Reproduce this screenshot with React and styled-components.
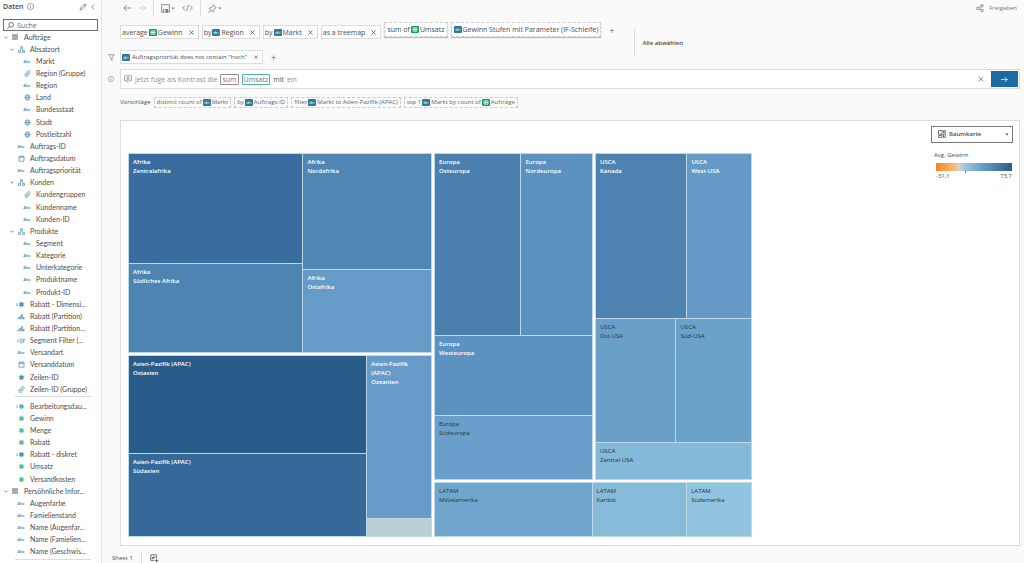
import React, { useState } from "react";
import styled, { createGlobalStyle } from "styled-components";

const colors = {
  text: "#4c4c4c",
  muted: "#8a8a8a",
  line: "#dcdcdc",
  dim: "#5b9cb8",
  measure: "#5cb897",
  tile: "#2f7a9b",
  green: "#0f9d6c",
  primary: "#1c6ba0",
};

const GlobalStyle = createGlobalStyle`
  * {
    box-sizing: border-box;
  }
  body {
    margin: 0;
    background: #fafafa;
    color: ${colors.text};
    font-family: "Open Sans", "Liberation Sans", sans-serif;
    font-size: 7px;
    line-height: 9px;
  }
  button, input, select {
    font: inherit;
    color: inherit;
    margin: 0;
    padding: 0;
    border: none;
    background: none;
    outline: none;
  }
  button {
    cursor: pointer;
  }
  svg {
    display: block;
    flex: none;
  }
`;

const Page = styled.div`
  display: grid;
  grid-template-columns: 102px minmax(0, 1fr);
  min-height: 100vh;
`;

/* ---------- data pane ---------- */

const Sidebar = styled.aside`
  display: flex;
  flex-direction: column;
  min-width: 0;
  background: #ffffff;
  border-right: 1px solid #e4e4e4;
`;
const SidebarHead = styled.header`
  display: flex;
  align-items: center;
  height: 13px;
  margin-bottom: 6px;
  padding: 0 6px 0 3px;
  gap: 4px;
  color: #777777;
  h2 {
    margin: 0;
    color: ${colors.text};
    font-size: 7px;
    font-weight: 600;
  }
  .edit {
    margin-left: auto;
  }
`;
const SearchBox = styled.label`
  display: flex;
  align-items: center;
  gap: 3px;
  height: 12px;
  margin: 0 3px;
  padding: 0 3px;
  border: 1px solid #6d6d6d;
  input {
    flex: 1;
    min-width: 0;
  }
  input::placeholder {
    color: #666666;
    opacity: 1;
  }
`;
const Tree = styled.ul`
  display: flex;
  flex: 1;
  flex-direction: column;
  margin: 0;
  padding: 0;
  list-style: none;
`;
const TreeRow = styled.li`
  display: grid;
  grid-template-columns: 6px 12px minmax(0, 1fr);
  flex: 1 1 12px;
  align-items: center;
  justify-items: center;
  padding-left: ${(p) => 3 + p.$level * 6}px;
  padding-right: 10px;
  color: #777777;
  .name {
    justify-self: start;
    padding-left: 3px;
    color: ${colors.text};
    font-family: Lato, sans-serif;
    white-space: nowrap;
  }
`;
const Divider = styled.li`
  height: 1px;
  margin: 1px 10px 3px 15px;
  background: #dddddd;
`;
const AbcMark = styled.span`
  color: ${colors.dim};
  font-size: 4px;
  font-weight: 700;
`;

/* ---------- main area ---------- */

const Main = styled.main`
  display: flex;
  flex-direction: column;
  min-width: 0;
  padding-right: 4px;
`;
const Toolbar = styled.nav`
  display: flex;
  align-items: center;
  gap: 7px;
  height: 16px;
  padding-left: 21px;
  color: #777777;
`;
const ToolButton = styled.button`
  display: flex;
  align-items: center;
  gap: 1px;
  opacity: ${(p) => (p.disabled ? 0.4 : 1)};
  ${(p) => p.$end && "margin-left: auto; padding-right: 3px; gap: 5px; font-size: 6px;"}
`;
const Rule = styled.span`
  width: 1px;
  height: ${(p) => p.$height || 15}px;
  background: ${colors.line};
`;
const QueryHead = styled.section`
  display: flex;
  align-items: center;
  margin: 6px 0 5px;
`;
const Queries = styled.div`
  display: grid;
  gap: 11px;
`;
const Line = styled.div`
  display: grid;
  grid-template-columns: 18px minmax(0, 1fr);
  align-items: center;
  justify-items: center;
  color: ${colors.muted};
`;
const Pills = styled.div`
  display: flex;
  align-items: flex-end;
  justify-self: start;
  gap: 3px;
`;
const Pill = styled.span`
  display: inline-flex;
  align-items: center;
  gap: ${(p) => (p.$small ? 2 : 1)}px;
  height: 14px;
  padding: 0 4px 0 1px;
  background: #ffffff;
  border: 1px solid ${colors.line};
  color: ${colors.text};
  font-size: ${(p) => (p.$small ? 6 : 7)}px;
  white-space: nowrap;
  button {
    margin-left: 5px;
  }
`;
const PreviewPill = styled(Pill)`
  height: 15px;
  margin-bottom: 2px;
  padding: 0 2px;
  border: 1px dashed #cccccc;
  box-shadow: 0 1px 1px #bbbbbb;
`;
const AddButton = styled.button`
  align-self: center;
  margin-left: 5px;
  color: #666666;
  font-size: 9px;
`;
const Deselect = styled.div`
  display: flex;
  align-items: center;
  gap: 7px;
  margin-left: 20px;
  font-size: 6px;
  font-weight: 600;
`;
const Ask = styled.form`
  display: flex;
  align-items: center;
  justify-self: stretch;
  height: 20px;
  padding: 1px 1px 1px 3px;
  gap: 3px;
  background: #ffffff;
  border: 1px solid ${colors.line};
  color: #919191;
  white-space: nowrap;
  input {
    flex: 1;
    min-width: 0;
  }
`;
const Token = styled.span`
  padding: 0 1px;
  border: 1px solid ${(p) => p.$color};
  border-radius: 1px;
  color: #777777;
`;
const Known = styled.span`
  color: #555555;
`;
const Submit = styled.button`
  display: grid;
  place-items: center;
  align-self: stretch;
  width: 27px;
  margin-left: 4px;
  background: ${colors.primary};
  color: #ffffff;
`;
const Suggestions = styled.div`
  display: flex;
  align-items: center;
  gap: 3px;
  margin: 8px 0 12px 18px;
  font-size: 6px;
  white-space: nowrap;
`;
const Suggestion = styled.button`
  display: flex;
  align-items: center;
  gap: 1px;
  height: 11px;
  padding: 0 2px;
  border: 1px dashed #cccccc;
  color: #666666;
`;
const Badge = styled.span`
  display: inline-grid;
  place-items: center;
  width: 8px;
  height: 7px;
  border-radius: 1px;
  background: ${(p) => (p.$measure ? colors.green : colors.tile)};
  color: #ffffff;
`;
const Panel = styled.section`
  display: grid;
  flex: 1;
  grid-template-columns: minmax(0, 1fr) 82px;
  column-gap: 179px;
  margin-left: 18px;
  padding: 5px 6px 8px 7px;
  background: #ffffff;
  border: 1px solid ${colors.line};
`;

/* ---------- treemap ---------- */

const Split = styled.div`
  display: flex;
  flex: ${(p) => p.$size || 1} 1 0;
  flex-direction: ${(p) => (p.$down ? "column" : "row")};
  gap: ${(p) => (p.$group ? 1 : 2)}px;
  min-width: 0;
  min-height: 0;
`;
const Market = styled(Split)`
  padding: 1px;
  background: #bfd8e6;
`;
const Tile = styled.div`
  flex: ${(p) => p.$size} 1 0;
  min-width: 0;
  min-height: 0;
  overflow: hidden;
  background: ${(p) => p.$fill};
  color: ${(p) => (p.$dark ? "#26323c" : "#ffffff")};
  font-size: 6px;
  font-weight: ${(p) => (p.$dark ? 400 : 600)};
`;
const TileLabel = styled.div`
  padding: 4px 8px 4px 4px;
`;
const MapArea = styled.div`
  display: flex;
  margin-top: 27px;
`;
const Legend = styled.div`
  p {
    margin: 8px 3px 3px;
    font-size: 6px;
  }
`;
const ChartPicker = styled.label`
  position: relative;
  display: block;
  select {
    width: 100%;
    height: 17px;
    padding-left: 17px;
    border: 1px solid #777777;
    appearance: none;
    font-size: 6px;
    font-weight: 600;
  }
  svg {
    position: absolute;
    top: 4px;
    left: 7px;
    pointer-events: none;
  }
  svg.caret {
    top: 7px;
    left: auto;
    right: 4px;
  }
`;
const Ramp = styled.div`
  height: 8px;
  margin: 0 1px 0 5px;
  background: linear-gradient(
    90deg,
    #f28326,
    #fbb567 22%,
    #dccfc0 30%,
    #98c7e0 38%,
    #5f97c4 65%,
    #2a5c8a
  );
`;
const RampTick = styled.div`
  width: 1px;
  height: 2px;
  margin-left: 42%;
  background: #777777;
`;
const RampLabels = styled.div`
  display: flex;
  justify-content: space-between;
  margin: 0 1px 0 5px;
  font-size: 6px;
  line-height: 7px;
`;
const Tabs = styled.footer`
  display: flex;
  align-items: flex-end;
  gap: 8px;
  height: 17px;
  padding-left: 10px;
  font-size: 6px;
  button {
    height: 9px;
  }
`;

/* ---------- icons ---------- */

const Svg = ({ w = 8, h = w, box, children, ...rest }) => (
  <svg
    width={w}
    height={h}
    viewBox={box || `0 0 ${w} ${h}`}
    fill="none"
    stroke="currentColor"
    strokeWidth="0.8"
    aria-hidden="true"
    {...rest}
  >
    {children}
  </svg>
);
const Close = ({ size = 5 }) => (
  <Svg w={size} box="0 0 5 5">
    <path d="M.5 .5l4 4M4.5 .5l-4 4" />
  </Svg>
);
const Caret = (props) => (
  <Svg w={4} h={3} stroke="none" {...props}>
    <path d="M.4 .4h3.2L2 2.4z" fill="currentColor" />
  </Svg>
);
const Arrow = ({ back, w = 8 }) => (
  <Svg w={w} box="0 0 8 8">
    <path d={back ? "M8 4H.8M3.8 1L.8 4l3 3" : "M0 4h7.2M4.2 1l3 3-3 3"} />
  </Svg>
);
const Info = ({ size = 7 }) => (
  <Svg w={size} box="0 0 8 8">
    <circle cx="4" cy="4" r="3.5" />
    <path d="M4 3.5v2.4M4 2v.8" />
  </Svg>
);

const FieldIcon = ({ type }) => {
  if (type === "abc") return <AbcMark>Abc</AbcMark>;
  if (type === "table")
    return (
      <Svg w={6} strokeWidth="0.6">
        <path d="M.5 .5h5v5h-5zM.5 1.5h5M.5 2.8h5M.5 4.1h5M2.2 1.5v4M3.9 1.5v4" />
      </Svg>
    );
  if (type === "hier")
    return (
      <Svg w={7} stroke={colors.dim}>
        <path d="M2.6 .7h1.8v1.6H2.6zM.5 4.6h2v1.8h-2zM4.5 4.6h2v1.8h-2zM3.5 2.3L1.5 4.6M3.5 2.3l2 2.3" />
      </Svg>
    );
  if (type === "group")
    return (
      <Svg w={7} stroke={colors.dim}>
        <path d="M1.2 3.3v1.9a1.3 1.3 0 0 0 2.6 .4L6 2.3A1.2 1.2 0 0 0 4 1L1.9 4.3a.5 .5 0 0 0 .9 .5L4.6 2.2" />
      </Svg>
    );
  if (type === "geo")
    return (
      <Svg w={7} stroke={colors.dim}>
        <circle cx="3.5" cy="3.5" r="2.6" />
        <ellipse cx="3.5" cy="3.5" rx="1" ry="2.6" />
        <path d="M.9 3.5h5.2" />
      </Svg>
    );
  if (type === "date")
    return (
      <Svg w={7} stroke={colors.dim}>
        <path d="M1 1.4h5v4.8H1zM1 2.6h5M2.2 .4v1M4.8 .4v1" />
      </Svg>
    );
  if (type === "bins")
    return (
      <Svg w={8} h={7} stroke="none">
        <path
          d="M.4 4.8h1.4v1.4H.4zM2.3 3h1.5v3.2H2.3zM4.2 1h1.4v5.2H4.2zM6 4h1.5v2.2H6z"
          fill={colors.dim}
        />
      </Svg>
    );
  if (type === "bool")
    return (
      <Svg w={9} h={6} stroke={colors.dim} strokeWidth="0.7">
        <path d="M0 2.2h1.6M0 3.8h1.6M2.4 1.2h2M3.4 1.2v3.8M5.3 .4L4.6 5.8M6.4 5V1.2h2M6.4 3h1.6" />
      </Svg>
    );
  const calc = type.startsWith("calc");
  const fill = type.endsWith("Dim") ? "#4f93b4" : colors.measure;
  return (
    <Svg w={calc ? 11 : 7} h={7} box={calc ? "0 0 11 7" : "0 0 7 7"}>
      <g transform={calc ? "translate(2 0)" : undefined}>
        <path
          d="M2.6 .8v5.4M4.4 .8v5.4M.8 2.6h5.4M.8 4.4h5.4"
          stroke={fill}
          strokeWidth="0.7"
        />
        <circle cx="3.5" cy="3.5" r="1.9" fill={fill} stroke="none" />
      </g>
      {calc && <path d="M.4 3h1.6M.4 4.2h1.6" stroke={fill} />}
    </Svg>
  );
};

const FieldBadge = ({ measure }) => (
  <Badge $measure={measure}>
    {measure ? (
      <Svg w={6} h={5} strokeWidth="0.7">
        <path d="M1 .8h4v3.4H1zM3 .8v3.4M1 2.5h4" />
      </Svg>
    ) : (
      <Svg w={6} h={5} strokeWidth="0.4">
        <circle cx="1.2" cy="2.9" r=".7" />
        <path d="M1.9 2.1v1.5M2.6 1v2.6M5.6 2.3a.7 .7 0 1 0 0 1.1" />
        <circle cx="3.3" cy="2.9" r=".7" />
      </Svg>
    )}
  </Badge>
);

/* ---------- content ---------- */

const fields = [
  [0, "table", "Aufträge", true],
  [1, "hier", "Absatzort", true],
  [2, "abc", "Markt"],
  [2, "group", "Region (Gruppe)"],
  [2, "abc", "Region"],
  [2, "geo", "Land"],
  [2, "abc", "Bundesstaat"],
  [2, "geo", "Stadt"],
  [2, "geo", "Postleitzahl"],
  [1, "abc", "Auftrags-ID"],
  [1, "date", "Auftragsdatum"],
  [1, "abc", "Auftragspriorität"],
  [1, "hier", "Kunden", true],
  [2, "group", "Kundengruppen"],
  [2, "abc", "Kundenname"],
  [2, "abc", "Kunden-ID"],
  [1, "hier", "Produkte", true],
  [2, "abc", "Segment"],
  [2, "abc", "Kategorie"],
  [2, "abc", "Unterkategorie"],
  [2, "abc", "Produktname"],
  [2, "abc", "Produkt-ID"],
  [1, "calcDim", "Rabatt - Dimensi..."],
  [1, "bins", "Rabatt (Partition)"],
  [1, "bins", "Rabatt (Partition..."],
  [1, "bool", "Segment Filter (..."],
  [1, "abc", "Versandart"],
  [1, "date", "Versanddatum"],
  [1, "numDim", "Zeilen-ID"],
  [1, "group", "Zeilen-ID (Gruppe)"],
  null,
  [1, "calc", "Bearbeitungsdau..."],
  [1, "num", "Gewinn"],
  [1, "num", "Menge"],
  [1, "num", "Rabatt"],
  [1, "calcDim", "Rabatt - diskret"],
  [1, "num", "Umsatz"],
  [1, "num", "Versandkosten"],
  [0, "table", "Persöhnliche Infor...", true],
  [1, "abc", "Augenfarbe"],
  [1, "abc", "Famielienstand"],
  [1, "abc", "Name (Augenfar..."],
  [1, "abc", "Name (Famielien..."],
  [1, "abc", "Name (Geschwis..."],
  null,
];

const leaf = (size, name, fill, dark) => ({ size, name, fill, dark });

const treemap = {
  items: [
    {
      size: 304,
      down: true,
      items: [
        {
          size: 199,
          market: "Afrika",
          items: [
            {
              size: 174,
              down: true,
              items: [
                leaf(110, "Zentralafrika", "#3a6d9f"),
                leaf(88, "Südliches Afrika", "#4e84b1"),
              ],
            },
            {
              size: 128,
              down: true,
              items: [
                leaf(116, "Nordafrika", "#5086b4"),
                leaf(82, "Ostafrika", "#659bc6"),
              ],
            },
          ],
        },
        {
          size: 181,
          market: "Asien-Pazifik (APAC)",
          items: [
            {
              size: 238,
              down: true,
              items: [
                leaf(98, "Ostasien", "#2a5c8a"),
                leaf(82, "Südasien", "#35699a"),
              ],
            },
            {
              size: 64,
              down: true,
              items: [
                leaf(163, "Ozeanien", "#659bc6"),
                leaf(17, "", "#b7ced4"),
              ],
            },
          ],
        },
      ],
    },
    {
      size: 318,
      down: true,
      items: [
        {
          size: 327,
          items: [
            {
              size: 159,
              market: "Europa",
              down: true,
              items: [
                {
                  size: 182,
                  items: [
                    leaf(86, "Osteuropa", "#4b80ae"),
                    leaf(71, "Nordeuropa", "#5b91bf"),
                  ],
                },
                leaf(79, "Westeuropa", "#5c92c0"),
                leaf(63, "Südeuropa", "#699fca", true),
              ],
            },
            {
              size: 157,
              market: "USCA",
              down: true,
              items: [
                {
                  size: 164,
                  items: [
                    leaf(91, "Kanada", "#4e83b1"),
                    leaf(64, "West-USA", "#649ac5"),
                  ],
                },
                {
                  size: 123,
                  items: [
                    leaf(80, "Ost-USA", "#699fc9", true),
                    leaf(75, "Süd-USA", "#6ba2ca", true),
                  ],
                },
                leaf(36, "Zentral-USA", "#83b9d9", true),
              ],
            },
          ],
        },
        {
          size: 53,
          market: "LATAM",
          items: [
            leaf(157, "Mittelamerika", "#70a6ce", true),
            leaf(94, "Karibik", "#85bad9", true),
            leaf(64, "Südamerika", "#92c3e0", true),
          ],
        },
      ],
    },
  ],
};

const MapNode = ({ node, market }) => {
  if (!node.items)
    return (
      <Tile $size={node.size} $fill={node.fill} $dark={node.dark}>
        {node.name && (
          <TileLabel>
            <div>{market}</div>
            <div>{node.name}</div>
          </TileLabel>
        )}
      </Tile>
    );
  const current = node.market || market;
  const Box = node.market ? Market : Split;
  return (
    <Box $size={node.size} $down={node.down} $group={!!current}>
      {node.items.map((item, i) => (
        <MapNode key={i} node={item} market={current} />
      ))}
    </Box>
  );
};

const App = () => {
  const [search, setSearch] = useState("");
  const [question, setQuestion] = useState("ein");

  return (
    <Page>
      <GlobalStyle />
      <Sidebar>
        <SidebarHead>
          <h2>Daten</h2>
          <Info />
          <button className="edit" aria-label="Bearbeiten">
            <Svg w={8}>
              <path d="M1 7l.6-2L5.8 .8l1.4 1.4L3 6.4zM5 1.6L6.4 3" />
            </Svg>
          </button>
          <button aria-label="Einklappen">
            <Svg w={4} h={6}>
              <path d="M3.2 .5L.8 3l2.4 2.5" />
            </Svg>
          </button>
        </SidebarHead>
        <SearchBox>
          <Svg w={7}>
            <circle cx="4.2" cy="2.8" r="2.3" />
            <path d="M2.5 4.5L.4 6.6" />
          </Svg>
          <input
            type="text"
            aria-label="Suche"
            placeholder="Suche"
            value={search}
            onChange={(e) => setSearch(e.target.value)}
          />
        </SearchBox>
        <Tree>
          {fields.map((field, i) => {
            if (!field) return <Divider key={i} />;
            const [level, type, name, open] = field;
            return (
              <TreeRow key={i} $level={level}>
                {open ? (
                  <button aria-label={name}>
                    <Svg w={4} h={3}>
                      <path d="M.4 .6L2 2.3 3.6 .6" />
                    </Svg>
                  </button>
                ) : (
                  <span />
                )}
                <FieldIcon type={type} />
                <span className="name">{name}</span>
              </TreeRow>
            );
          })}
        </Tree>
      </Sidebar>

      <Main>
        <Toolbar>
          <ToolButton aria-label="Zurück">
            <Arrow back />
          </ToolButton>
          <ToolButton aria-label="Vorwärts" disabled>
            <Arrow />
          </ToolButton>
          <Rule />
          <ToolButton aria-label="Speichern">
            <Svg w={9}>
              <path d="M.6 .6h7.8v7.6H.6zM2.3 8V5.6h4.4V8" />
              <path d="M5 5.6h1.6v2.6H5z" fill="currentColor" />
            </Svg>
            <Caret />
          </ToolButton>
          <ToolButton aria-label="Einbetten">
            <Svg w={11} h={8}>
              <path d="M3 1.6L.6 4 3 6.4M8 1.6L10.4 4 8 6.4M6.5 .6l-2 6.8" />
            </Svg>
          </ToolButton>
          <Rule />
          <ToolButton aria-label="Anheften">
            <Svg w={9}>
              <path d="M5.2 .8l3 3-.8 .3-2 2 .1 1.3-.7 .6-3.5-3.5 .6-.7 1.3 .1 2-2zM2.8 6.2L.5 8.5" />
            </Svg>
            <Caret />
          </ToolButton>
          <ToolButton $end>
            <Svg w={8}>
              <circle cx="1.8" cy="4.4" r="1.3" />
              <circle cx="6" cy="1.8" r="1.3" />
              <circle cx="6" cy="6.4" r="1.3" />
              <path d="M2.9 3.7L4.9 2.5M3 5l1.8 .8" />
            </Svg>
            Freigeben
          </ToolButton>
        </Toolbar>

        <QueryHead>
          <Queries>
            <Line>
              <span />
              <Pills>
                <Pill>
                  average <FieldBadge measure /> Gewinn
                  <button aria-label="Gewinn entfernen">
                    <Close />
                  </button>
                </Pill>
                <Pill>
                  by <FieldBadge /> Region
                  <button aria-label="Region entfernen">
                    <Close />
                  </button>
                </Pill>
                <Pill>
                  by <FieldBadge /> Markt
                  <button aria-label="Markt entfernen">
                    <Close />
                  </button>
                </Pill>
                <Pill>
                  as a treemap
                  <button aria-label="Treemap entfernen">
                    <Close />
                  </button>
                </Pill>
                <PreviewPill>
                  sum of <FieldBadge measure /> Umsatz
                </PreviewPill>
                <PreviewPill>
                  <FieldBadge /> Gewinn Stufen mit Parameter (IF-Schleife)
                </PreviewPill>
                <AddButton aria-label="Hinzufügen">+</AddButton>
              </Pills>
            </Line>
            <Line>
              <Svg w={7}>
                <path d="M.6 .7h5.8L4.2 3.6v2.8l-1.4-.8v-2z" />
              </Svg>
              <Pills>
                <Pill $small>
                  <FieldBadge /> Auftragspriorität does not contain "hoch"
                  <button aria-label="Filter entfernen">
                    <Close size={4} />
                  </button>
                </Pill>
                <AddButton aria-label="Filter hinzufügen">+</AddButton>
              </Pills>
            </Line>
          </Queries>
          <Deselect>
            <Rule $height={28} />
            <button>Alle abwählen</button>
          </Deselect>
        </QueryHead>

        <Line>
          <Info size={6} />
          <Ask onSubmit={(e) => e.preventDefault()}>
            <Svg w={8}>
              <path d="M.6 .8h6.8v5H4.6L3.4 7.2V5.8H.6zM2.6 4.8L4 1.8l1.4 3M3 3.9h2" />
            </Svg>
            <span>jetzt füge als Kontrast die</span>
            <Token $color="#9a8a96">sum</Token>
            <Token $color="#4fb59a">Umsatz</Token>
            <Known>mit</Known>
            <input
              type="text"
              aria-label="Frage"
              value={question}
              onChange={(e) => setQuestion(e.target.value)}
            />
            <button type="button" aria-label="Eingabe löschen">
              <Close size={6} />
            </button>
            <Submit aria-label="Absenden">
              <Arrow w={7} />
            </Submit>
          </Ask>
        </Line>

        <Suggestions>
          <span>Vorschläge</span>
          <Suggestion>
            distinct count of <FieldBadge /> Markt
          </Suggestion>
          <Suggestion>
            by <FieldBadge /> Auftrags-ID
          </Suggestion>
          <Suggestion>
            filter <FieldBadge /> Markt to Asien-Pazifik (APAC)
          </Suggestion>
          <Suggestion>
            top 1 <FieldBadge /> Markt by count of <FieldBadge measure />{" "}
            Aufträge
          </Suggestion>
        </Suggestions>

        <Panel>
          <MapArea>
            <MapNode node={treemap} />
          </MapArea>
          <Legend>
            <ChartPicker>
              <Svg w={8}>
                <path d="M.5 .6h3.6v3.6H.5zM.5 5.4h3.6v2H.5zM5.4 .6h2v2h-2zM5.4 4h2v3.4h-2z" />
              </Svg>
              <select aria-label="Diagrammtyp" defaultValue="tree">
                <option value="tree">Baumkarte</option>
              </select>
              <Caret className="caret" />
            </ChartPicker>
            <p>Avg. Gewinn</p>
            <Ramp />
            <RampTick />
            <RampLabels>
              <span>-31,1</span>
              <span>73,7</span>
            </RampLabels>
          </Legend>
        </Panel>

        <Tabs>
          <button>Sheet 1</button>
          <Rule $height={11} />
          <button aria-label="Neues Blatt">
            <Svg w={9}>
              <path d="M4 6.4H.8V.8h5.6V4M2.4 5V3M3.6 5V2.2M4.8 4V3M6.6 4.8v3.6M4.8 6.6h3.6" />
            </Svg>
          </button>
        </Tabs>
      </Main>
    </Page>
  );
};

export default App;
